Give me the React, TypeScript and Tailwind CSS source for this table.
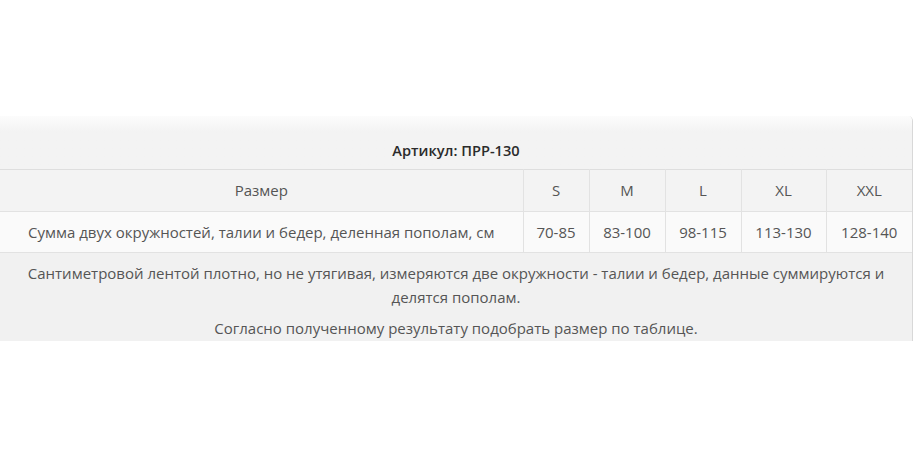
import React from "react";

const sizes = ["S", "M", "L", "XL", "XXL"];
const values = ["70-85", "83-100", "98-115", "113-130", "128-140"];
const widths = ["w-[66px]", "w-[76px]", "w-[76px]", "w-[85px]", "w-[86px]"];

export default function App() {
    return (
        <div className="w-[915px] h-[457px] bg-white pt-[116px] font-['Open_Sans',sans-serif] text-[15px] text-[#555]">
            <div className="w-[913px] rounded-tr-[5px] border-r border-[#d8d8d8] overflow-hidden">
                <table className="w-full border-collapse table-fixed">
                    <colgroup>
                        <col className="w-[523px]" />
                        {widths.map((w, i) => <col key={i} className={w} />)}
                    </colgroup>
                    <tbody>
                        <tr className="bg-gradient-to-b from-[#fcfcfc] to-[#f3f3f3] to-[30%] border-b border-[#dedede]">
                            <td colSpan={6} className="text-center pt-[24px] pb-[9px] leading-[20px] text-[14.6px] font-semibold text-[#2b2b2b]">
                                Артикул: ПРР-130
                            </td>
                        </tr>
                        <tr className="bg-[#f3f3f3] border-b border-[#e2e2e2]">
                            <td className="h-[42px] text-center">Размер</td>
                            {sizes.map(s => (
                                <td key={s} className="text-center border-l border-[#e2e2e2]">{s}</td>
                            ))}
                        </tr>
                        <tr className="bg-[#fafafa] border-b border-[#e2e2e2]">
                            <td className="h-[41px] text-center">Сумма двух окружностей, талии и бедер, деленная пополам, см</td>
                            {values.map(v => (
                                <td key={v} className="text-center border-l border-[#e2e2e2]">{v}</td>
                            ))}
                        </tr>
                    </tbody>
                </table>
                <div className="bg-[#f1f1f1] pt-[8px] px-[20px] h-[88px] text-center leading-[24px]">
                    <p>Сантиметровой лентой плотно, но не утягивая, измеряются две окружности - талии и бедер, данные суммируются и делятся пополам.</p>
                    <p className="mt-[7px]">Согласно полученному результату подобрать размер по таблице.</p>
                </div>
            </div>
        </div>
    );
}
